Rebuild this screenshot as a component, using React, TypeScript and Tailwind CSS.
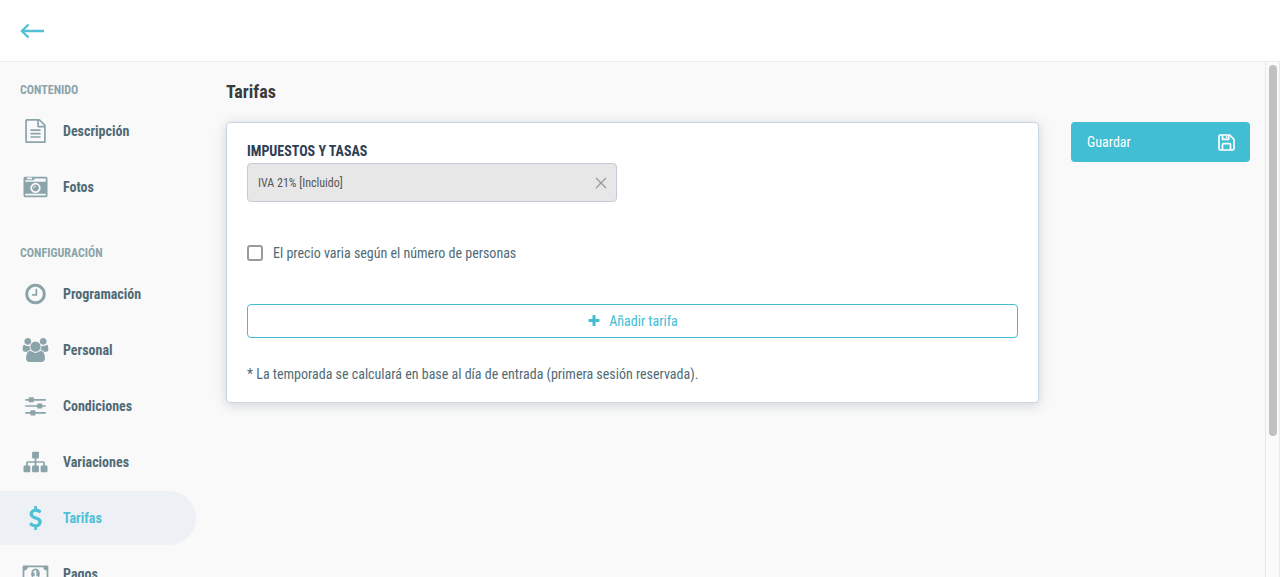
import { useState } from 'react';
import type { ReactNode } from 'react';

interface IconProps {
  path: string;
  viewBox?: string;
  className?: string;
}

interface MenuItem {
  label: string;
  path: string;
  viewBox?: string;
}

interface MenuGroup {
  title: string;
  items: MenuItem[];
}

const ICONS = {
  file: 'M1596 380q28 28 48 76t20 88v1152q0 40-28 68t-68 28h-1344q-40 0-68-28t-28-68v-1600q0-40 28-68t68-28h896q40 0 88 20t76 48zm-444-244v376h376q-10-29-22-41l-313-313q-12-12-41-22zm384 1528v-1024h-416q-40 0-68-28t-28-68v-416h-768v1536h1280zm-1024-864q0-14 9-23t23-9h704q14 0 23 9t9 23v64q0 14-9 23t-23 9h-704q-14 0-23-9t-9-23v-64zm736 224q14 0 23 9t9 23v64q0 14-9 23t-23 9h-704q-14 0-23-9t-9-23v-64q0-14 9-23t23-9h704zm0 256q14 0 23 9t9 23v64q0 14-9 23t-23 9h-704q-14 0-23-9t-9-23v-64q0-14 9-23t23-9h704z',
  camera: 'M928 832q0-14-9-23t-23-9q-66 0-113 47t-47 113q0 14 9 23t23 9 23-9 9-23q0-40 28-68t68-28q14 0 23-9t9-23zm224 130q0 106-75 181t-181 75-181-75-75-181 75-181 181-75 181 75 75 181zm-1024 574h1536v-128h-1536v128zm1152-574q0-159-112.5-271.5t-271.5-112.5-271.5 112.5-112.5 271.5 112.5 271.5 271.5 112.5 271.5-112.5 112.5-271.5zm-1024-642h384v-128h-384v128zm-128 192h1536v-256h-828l-64 128h-644v128zm1664-256v1280q0 53-37.5 90.5t-90.5 37.5h-1536q-53 0-90.5-37.5t-37.5-90.5v-1280q0-53 37.5-90.5t90.5-37.5h1536q53 0 90.5 37.5t37.5 90.5z',
  clock: 'M1024 544v448q0 14-9 23t-23 9h-320q-14 0-23-9t-9-23v-64q0-14 9-23t23-9h224v-352q0-14 9-23t23-9h64q14 0 23 9t9 23zm416 352q0-148-73-273t-198-198-273-73-273 73-198 198-73 273 73 273 198 198 273 73 273-73 198-198 73-273zm224 0q0 209-103 385.5t-279.5 279.5-385.5 103-385.5-103-279.5-279.5-103-385.5 103-385.5 279.5-279.5 385.5-103 385.5 103 279.5 279.5 103 385.5z',
  users: 'M529 896q-162 5-265 128h-134q-82 0-138-40.5t-56-118.5q0-353 124-353 6 0 43.5 21t97.5 42.5 119 21.5q67 0 133-23-5 37-5 66 0 139 81 256zm1071 637q0 120-73 189.5t-194 69.5h-874q-121 0-194-69.5t-73-189.5q0-53 3.5-103.5t14-109 26.5-108.5 43-97.5 62-81 85.5-53.5 111.5-20q10 0 43 21.5t73 48 107 48 135 21.5 135-21.5 107-48 73-48 43-21.5q61 0 111.5 20t85.5 53.5 62 81 43 97.5 26.5 108.5 14 109 3.5 103.5zm-1024-1277q0 106-75 181t-181 75-181-75-75-181 75-181 181-75 181 75 75 181zm704 384q0 159-112.5 271.5t-271.5 112.5-271.5-112.5-112.5-271.5 112.5-271.5 271.5-112.5 271.5 112.5 112.5 271.5zm576 225q0 78-56 118.5t-138 40.5h-134q-103-123-265-128 81-117 81-256 0-29-5-66 66 23 133 23 59 0 119-21.5t97.5-42.5 43.5-21q124 0 124 353zm-128-609q0 106-75 181t-181 75-181-75-75-181 75-181 181-75 181 75 75 181z',
  sliders: 'M128 368h256v-64q0-64 64-64h256q64 0 64 64v64h896v128h-896v64q0 64-64 64h-256q-64 0-64-64v-64h-256zM128 832h896v-64q0-64 64-64h256q64 0 64 64v64h256v128h-256v64q0 64-64 64h-256q-64 0-64-64v-64h-896zM128 1344h384v-64q0-64 64-64h256q64 0 64 64v64h768v128h-768v64q0 64-64 64h-256q-64 0-64-64v-64h-384z',
  sitemap: 'M1792 1248v320q0 40-28 68t-68 28h-320q-40 0-68-28t-28-68v-320q0-40 28-68t68-28h96v-192h-512v192h96q40 0 68 28t28 68v320q0 40-28 68t-68 28h-320q-40 0-68-28t-28-68v-320q0-40 28-68t68-28h96v-192h-512v192h96q40 0 68 28t28 68v320q0 40-28 68t-68 28h-320q-40 0-68-28t-28-68v-320q0-40 28-68t68-28h96v-192q0-52 38-90t90-38h512v-192h-96q-40 0-68-28t-28-68v-320q0-40 28-68t68-28h320q40 0 68 28t28 68v320q0 40-28 68t-68 28h-96v192h512q52 0 90 38t38 90v192h96q40 0 68 28t28 68z',
  dollar: 'M1362 1185q0 153-99.5 263.5t-258.5 136.5v175q0 14-9 23t-23 9h-135q-13 0-22.5-9.5t-9.5-22.5v-175q-66-9-127.5-31t-101.5-44.5-74-48-46.5-37.5-17.5-18q-17-21-2-41l103-135q7-10 23-12 15-2 24 9l2 2q113 99 243 125 37 8 74 8 81 0 142.5-43t61.5-122q0-28-15-53t-33.5-42-58.5-37.5-66-32-80-32.5q-39-16-61.5-25t-61.5-26.5-62.5-31-56.5-35.5-53.5-42.5-43.5-49-35.5-58-21-66.5-8.5-78q0-138 98-242t255-134v-180q0-13 9.5-22.5t22.5-9.5h135q14 0 23 9t9 23v176q57 6 110.5 23t87 33.5 63.5 37.5 39 29 15 14q17 18 5 38l-81 146q-8 15-23 16-14 3-27-7-3-3-14.5-12t-39-26.5-58.5-32-74.5-26-85.5-11.5q-95 0-155 43t-60 111q0 26 8.5 48t29.5 41.5 39.5 33 56 31 60.5 27 70 27.5q53 20 81 31.5t76 35 75.5 42.5 62 50 53 63.5 31.5 76.5 13 94z',
  money: 'M768 1152h384v-96h-128v-448h-114l-148 137 77 80q42-37 55-57h2v288h-128v96zm512-256q0 70-21 142t-59.5 134-101.5 101-138 39-138-39-101.5-101-59.5-134-21-142 21-142 59.5-134 101.5-101 138-39 138 39 101.5 101 59.5 134 21 142zm512 256v-512q-106 0-181-75t-75-181h-1152q0 106-75 181t-181 75v512q106 0 181 75t75 181h1152q0-106 75-181t181-75zm128-832v1152q0 26-19 45t-45 19h-1792q-26 0-45-19t-19-45v-1152q0-26 19-45t45-19h1792q26 0 45 19t19 45z',
  plus: 'M1600 736v192q0 40-28 68t-68 28h-416v416q0 40-28 68t-68 28h-192q-40 0-68-28t-28-68v-416h-416q-40 0-68-28t-28-68v-192q0-40 28-68t68-28h416v-416q0-40 28-68t68-28h192q40 0 68 28t28 68v416h416q40 0 68 28t28 68z',
};

const MENU: MenuGroup[] = [
  {
    title: 'Contenido',
    items: [
      { label: 'Descripción', path: ICONS.file },
      { label: 'Fotos', path: ICONS.camera },
    ],
  },
  {
    title: 'Configuración',
    items: [
      { label: 'Programación', path: ICONS.clock },
      { label: 'Personal', path: ICONS.users, viewBox: '-64 0 1920 1792' },
      { label: 'Condiciones', path: ICONS.sliders },
      { label: 'Variaciones', path: ICONS.sitemap },
      { label: 'Tarifas', path: ICONS.dollar },
      { label: 'Pagos', path: ICONS.money, viewBox: '0 0 1920 1792' },
    ],
  },
];

function Icon({ path, viewBox = '0 0 1792 1792', className }: IconProps) {
  return (
    <svg viewBox={viewBox} fill="currentColor" aria-hidden="true" className={className}>
      <path d={path} />
    </svg>
  );
}

function SaveIcon() {
  return (
    <svg
      viewBox="0 0 17 17"
      className="size-[17px]"
      fill="none"
      stroke="currentColor"
      strokeWidth="1.7"
      strokeLinejoin="round"
      aria-hidden="true"
    >
      <path d="M2.5 1h9.2L16 5.300v9.200a1.500 1.500 0 0 1-1.500 1.500h-12A1.500 1.500 0 0 1 1 14.500v-12A1.500 1.500 0 0 1 2.500 1z" />
      <path d="M4.500 16v-5.300a1 1 0 0 1 1-1h6a1 1 0 0 1 1 1V16M4.500 1v4.300h6.200V1" />
      <path d="M8.500 2.300v1.700" />
    </svg>
  );
}

function Sidebar({ active }: { active: string }) {
  return (
    <nav className="w-[196px] shrink-0 pt-5">
      {MENU.map((group) => (
        <section key={group.title} className="mb-[31px]">
          <h2 className="pl-5 text-xs leading-4 font-bold uppercase text-[#8aa4aa]">
            {group.title}
          </h2>
          <ul className="mt-1.5 space-y-0.5">
            {group.items.map((item) => (
              <li key={item.label}>
                <a
                  href="#"
                  className={`flex h-[54px] items-center gap-[14px] rounded-r-full pl-[22px] text-sm font-bold ${
                    item.label === active ? 'bg-[#edf1f5] text-[#4fc0d6]' : 'text-[#4f6b75]'
                  }`}
                >
                  <Icon
                    path={item.path}
                    viewBox={item.viewBox}
                    className={`h-6 w-[27px] ${item.label === active ? '' : 'text-[#8aa4aa]'}`}
                  />
                  {item.label}
                </a>
              </li>
            ))}
          </ul>
        </section>
      ))}
    </nav>
  );
}

function Card({ children }: { children: ReactNode }) {
  return (
    <div className="min-w-0 flex-1 rounded border border-[#c8d5e2] bg-white px-5 py-[18px] shadow-[0_2px_12px_rgba(79,107,117,0.25)]">
      {children}
    </div>
  );
}

function RatesForm() {
  const [tax, setTax] = useState('IVA 21% [Incluido]');
  const [perPerson, setPerPerson] = useState(false);

  return (
    <Card>
      <label htmlFor="tax" className="mb-0.5 block text-sm leading-5 font-bold uppercase text-[#2c3e55]">
        Impuestos y tasas
      </label>
      <div className="flex h-[39px] max-w-[370px] items-center rounded border border-[#c3ccd6] bg-[#e7e7e7] pr-[9px] pl-[10px]">
        <input
          id="tax"
          type="text"
          readOnly
          value={tax}
          className="min-w-0 flex-1 bg-transparent text-xs text-[#555555] outline-none"
        />
        <button type="button" aria-label="Quitar" onClick={() => setTax('')} className="text-[#999999]">
          <svg viewBox="0 0 12 12" className="size-3" stroke="currentColor" strokeWidth="1.3" fill="none">
            <path d="M1 1l10 10M11 1L1 11" />
          </svg>
        </button>
      </div>

      <label className="mt-[41px] flex items-center gap-[10px] text-sm leading-5 text-[#4f6b75]">
        <input
          type="checkbox"
          checked={perPerson}
          onChange={(e) => setPerPerson(e.target.checked)}
          className="size-4 appearance-none rounded-[3px] border-2 border-[#9b9b9b] bg-white checked:bg-[#41bed4]"
        />
        El precio varia según el número de personas
      </label>

      <button
        type="button"
        className="mt-[41px] flex h-[34px] w-full items-center justify-center gap-2 rounded border border-[#41bed4] text-sm text-[#41bed4]"
      >
        <Icon path={ICONS.plus} className="size-[14px]" />
        Añadir tarifa
      </button>

      <p className="mt-[26px] text-sm leading-5 text-[#4f6b75]">
        * La temporada se calculará en base al día de entrada (primera sesión reservada).
      </p>
    </Card>
  );
}

export default function App() {
  return (
    <div className="flex h-screen flex-col bg-[#f9f9f9] font-['Roboto_Condensed','Liberation_Sans_Narrow',Roboto,sans-serif]">
      <header className="flex h-[62px] shrink-0 items-center border-b border-[#ececec] bg-white px-5">
        <a href="#" aria-label="Volver" className="text-[#4fc0d6]">
          <svg
            viewBox="0 0 24 16"
            className="h-4 w-6"
            fill="none"
            stroke="currentColor"
            strokeWidth="2.4"
            strokeLinejoin="round"
          >
            <path d="M24 8H2M8.500 1.500L1.800 8l6.700 6.500" />
          </svg>
        </a>
      </header>

      <div className="flex min-h-0 flex-1">
        <div className="flex min-w-0 flex-1 overflow-hidden">
          <Sidebar active="Tarifas" />
          <main className="min-w-0 flex-1 pt-[18px] pr-[15px] pl-[30px]">
            <h1 className="text-lg leading-6 font-bold text-[#3b3b3b]">Tarifas</h1>
            <div className="mt-[18px] flex items-start gap-8">
              <RatesForm />
              <button
                type="button"
                className="flex h-10 w-[179px] shrink-0 items-center justify-between rounded bg-[#41bed4] pr-[15px] pl-4 text-sm text-white"
              >
                Guardar
                <SaveIcon />
              </button>
            </div>
          </main>
        </div>
        <div className="w-[15px] shrink-0 border-x border-[#e8e8e8] bg-[#fafafa] px-[3px] pt-[3px]">
          <div className="h-[72.5%] w-2 rounded-full bg-[#c1c1c1]" />
        </div>
      </div>
    </div>
  );
}
